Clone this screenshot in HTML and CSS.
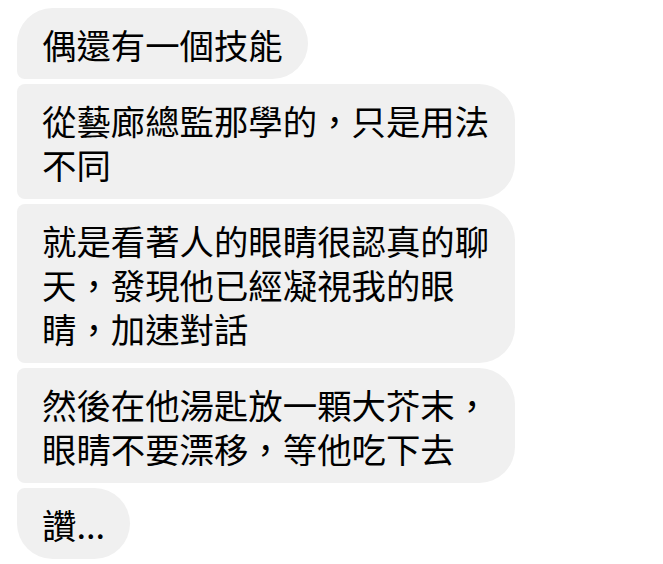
FILE: index.html
```html
<!DOCTYPE html>
<html lang="zh-Hant">
<head>
  <meta charset="UTF-8" />
  <meta name="viewport" content="width=device-width, initial-scale=1.0"/>
  <title>聊天</title>
  <link rel="stylesheet" href="styles.css">
</head>
<body>
  <div id="thread">
    <div class="bubble first">偶還有一個技能</div>
    <div class="bubble">從藝廊總監那學的，只是用法不同</div>
    <div class="bubble">就是看著人的眼睛很認真的聊天，發現他已經凝視我的眼睛，加速對話</div>
    <div class="bubble">然後在他湯匙放一顆大芥末，眼睛不要漂移，等他吃下去</div>
    <div class="bubble last">讚...</div>
  </div>
</body>
</html>
```

FILE: styles.css
```css
body {
  margin: 0;
  background-color: #ffffff;
  font-family: "Noto Sans CJK TC", "Noto Sans", sans-serif;
  color: #000000;
}
#thread {
  display: flex;
  flex-direction: column;
  align-items: flex-start;
  gap: 5px;
  padding: 8px 0 0 17px;
}
.bubble {
  background-color: #f0f0f0;
  font-size: 34.4px;
  line-height: 44px;
  padding: 13.5px 25px 13.5px 25px;
  max-width: 448px;
  border-radius: 8px 36px 36px 8px;
}
.bubble.first {
  border-top-left-radius: 36px;
}
.bubble.last {
  border-bottom-left-radius: 36px;
}
```
